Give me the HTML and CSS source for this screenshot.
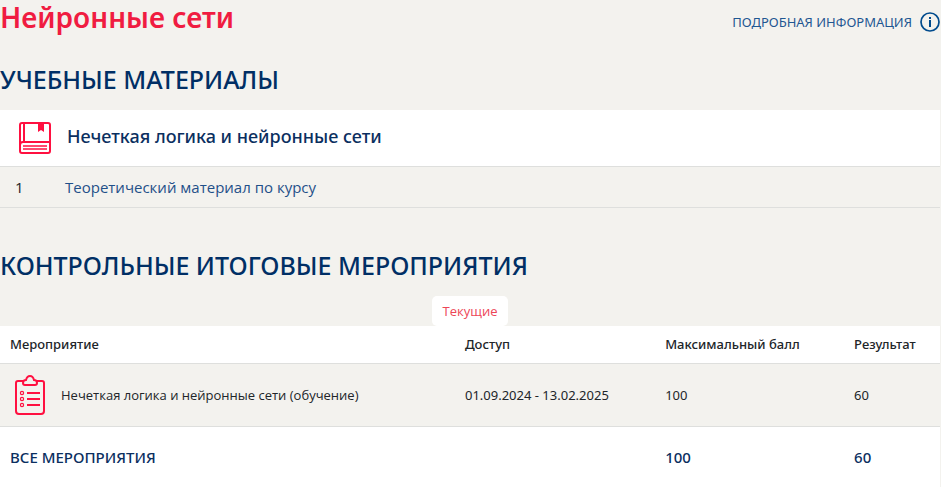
FILE: index.html
```html
<!DOCTYPE html>
<html lang="ru">
<head>
<meta charset="utf-8">
<meta name="viewport" content="width=device-width, initial-scale=1">
<title>Нейронные сети</title>
<link rel="stylesheet" href="styles.css">
</head>
<body>
<main class="page">
  <header class="top">
    <h1 class="title">Нейронные сети</h1>
    <a class="details" href="#info">ПОДРОБНАЯ ИНФОРМАЦИЯ
      <svg width="20" height="20" viewBox="0 0 20 20" aria-hidden="true"><circle cx="10" cy="10" r="9" fill="none" stroke="#004b8d" stroke-width="1.7"/><path d="M9 5h2v2H9zM9 8h2v7H9z" fill="#004b8d"/></svg>
    </a>
  </header>

  <section class="materials">
    <h2 class="heading">УЧЕБНЫЕ МАТЕРИАЛЫ</h2>
    <div class="subject">
      <svg width="32" height="32" viewBox="0 0 32 32" fill="none" stroke="#ff1040" stroke-width="2" aria-hidden="true"><rect x="1" y="1" width="30" height="30" rx="2"/><path d="M5 1v19"/><path d="M1 23q0-3 3-3h27"/><path d="M4 24h24M4 27h24" stroke-width="1.7"/><path d="M19 1h6v9l-3-2-3 2z" fill="#ff1040" stroke="none"/></svg>
      <h3 class="subject-name">Нечеткая логика и нейронные сети</h3>
    </div>
    <div class="material">
      <span class="number">1</span>
      <a class="material-link" href="#material">Теоретический материал по курсу</a>
    </div>
  </section>

  <section class="events">
    <h2 class="heading">КОНТРОЛЬНЫЕ ИТОГОВЫЕ МЕРОПРИЯТИЯ</h2>
    <div class="tabs"><button class="tab" type="button">Текущие</button></div>
    <table class="results">
      <colgroup><col class="col-event"><col class="col-access"><col class="col-max"><col></colgroup>
      <thead>
        <tr><th scope="col">Мероприятие</th><th scope="col">Доступ</th><th scope="col">Максимальный балл</th><th scope="col">Результат</th></tr>
      </thead>
      <tbody>
        <tr>
          <td><div class="event">
            <svg width="30" height="40" viewBox="0 0 30 40" fill="none" stroke="#ff1040" stroke-width="2" aria-hidden="true"><path d="M8 6H3q-2 0-2 2v28q0 3 3 3h22q3 0 3-3V8q0-2-2-2h-5"/><path d="M10 10q-2 0-2-2 0-3 3-3 1-4 4-4t4 4q3 0 3 3 0 2-2 2z"/><path d="M12 18h13M12 24h13M12 30h13"/><g stroke-width="1.2"><circle cx="7" cy="18" r="1.6"/><circle cx="7" cy="24" r="1.6"/><circle cx="7" cy="30" r="1.6"/></g></svg>
            <span class="event-name">Нечеткая логика и нейронные сети (обучение)</span>
          </div></td>
          <td>01.09.2024 - 13.02.2025</td><td>100</td><td>60</td>
        </tr>
      </tbody>
      <tfoot>
        <tr><th scope="row" colspan="2">ВСЕ МЕРОПРИЯТИЯ</th><td>100</td><td>60</td></tr>
      </tfoot>
    </table>
  </section>
</main>
</body>
</html>
```
FILE: styles.css
```css
* {
  box-sizing: border-box;
}

body {
  margin: 0;
  background: #f3f2ee;
  color: #212529;
  font-family: "Noto Sans", "Open Sans", sans-serif;
  font-size: 13px;
}

.page {
  padding-right: 1px;
}

.top {
  display: flex;
  justify-content: space-between;
  align-items: flex-start;
  height: 59px;
}

.title,
.heading,
.subject-name {
  margin: 0;
}

.title {
  color: #f01c41;
  font-size: 28px;
  font-weight: 600;
  line-height: 34px;
}

.details {
  display: flex;
  align-items: center;
  gap: 8px;
  padding-top: 12px;
  color: #1f5792;
  line-height: 20px;
  text-decoration: none;
}

.heading {
  padding-bottom: 11px;
  color: #002f65;
  font-size: 25px;
  font-weight: 500;
  line-height: 40px;
}

.subject {
  display: flex;
  align-items: center;
  gap: 16px;
  height: 57px;
  padding-left: 19px;
  background: #fff;
  border-bottom: 1px solid #dedfdd;
}

.subject-name {
  padding-bottom: 4px;
  color: #0b2f5f;
  font-size: 18px;
  font-weight: 500;
  line-height: 28px;
}

.material {
  display: grid;
  grid-template-columns: 50px 1fr;
  align-items: center;
  height: 41px;
  padding-left: 15px;
  border-bottom: 1px solid #dedfdd;
}

.number,
.material-link {
  font-family: "Open Sans", sans-serif;
  font-size: 15px;
}

.material-link {
  color: #1f5089;
  text-decoration: none;
}

.events {
  padding-top: 37px;
}

.tabs {
  display: flex;
  justify-content: center;
}

.tab {
  height: 30px;
  padding: 0 11px;
  background: #fff;
  border: 0;
  border-radius: 5px;
  color: #ed4657;
  font-family: "Open Sans", sans-serif;
  font-size: 13px;
}

.results {
  width: 100%;
  background: #fff;
  border-collapse: collapse;
  table-layout: fixed;
}

.col-event {
  width: 48.4%;
}

.col-access {
  width: 21.3%;
}

.col-max {
  width: 20.1%;
}

.results th,
.results td {
  padding: 0 10px;
  text-align: left;
}

.results thead th {
  height: 37px;
  font-weight: 500;
}

.results tbody tr {
  height: 63px;
  background: #f3f2ee;
  border-top: 1px solid #dedfdd;
  border-bottom: 1px solid #dedfdd;
}

.event {
  display: flex;
  align-items: center;
  gap: 16px;
  padding-left: 5px;
}

.event-name {
  font-family: "Open Sans", sans-serif;
}

.results tfoot tr {
  height: 61px;
  color: #0b2f5f;
  font-size: 15px;
}

.results tfoot th,
.results tfoot td {
  font-weight: 500;
}
```
